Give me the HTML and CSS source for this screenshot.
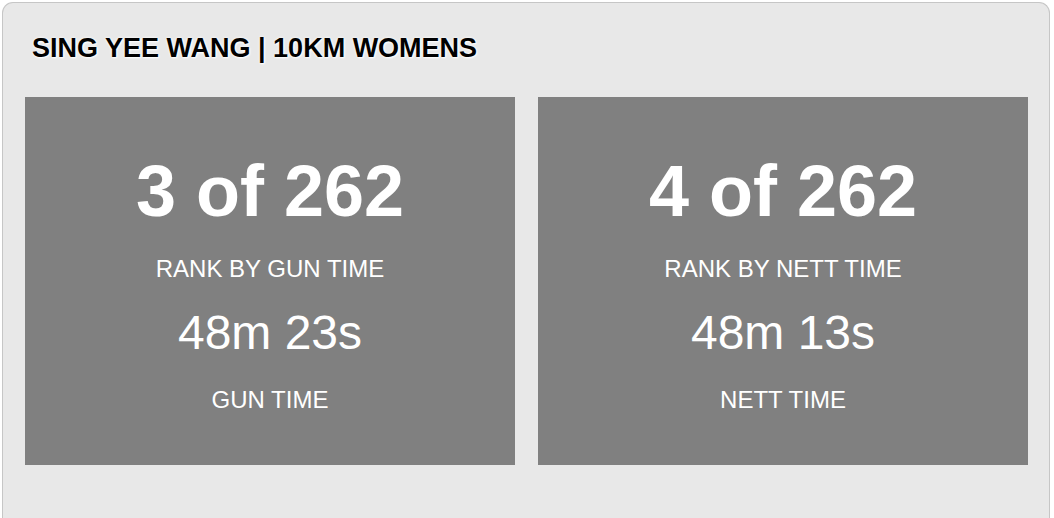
FILE: index.html
```html
<!doctype html>
<html lang="en">
	<head>
		<meta charset="UTF-8" />
		<meta name="viewport" content="width=device-width, initial-scale=1.0" />
		<title>Sing Yee Wang | 10KM Womens</title>
		<link rel="stylesheet" href="styles.css">
	</head>
	<body>
		<div class="panel">
			<h2 class="panel-title">SING YEE WANG | 10KM WOMENS</h2>

			<div class="stats">
				<div class="stat-card">
					<div class="stat-rank">3 of 262</div>
					<div class="stat-label">RANK BY GUN TIME</div>
					<div class="stat-time">48m 23s</div>
					<div class="stat-label stat-label-last">GUN TIME</div>
				</div>
				<div class="stat-card">
					<div class="stat-rank">4 of 262</div>
					<div class="stat-label">RANK BY NETT TIME</div>
					<div class="stat-time">48m 13s</div>
					<div class="stat-label stat-label-last">NETT TIME</div>
				</div>
			</div>
		</div>
	</body>
</html>
```

FILE: styles.css
```css
* {
	margin: 0;
	padding: 0;
	box-sizing: border-box;
}

html,
body {
	height: 100%;
}

body {
	font-family: "Liberation Sans", Arial, sans-serif;
	background: #ffffff;
	padding: 2px 4px 0 2px;
	overflow: hidden;
}

/* panel runs on below the fold, so no bottom edge */
.panel {
	height: 100%;
	background: #e8e8e8;
	border: 1px solid #c6c6c6;
	border-bottom: none;
	border-radius: 11px 11px 0 0;
	padding: 30px 21px 0 22px;
}

.panel-title {
	font-size: 27px;
	line-height: 30px;
	font-weight: 700;
	color: #000;
	padding-left: 7px;
	text-shadow: 0 0 3px #fff, 1px 1px 2px #fff;
	margin-bottom: 34px;
}

.stats {
	display: grid;
	grid-template-columns: 1fr 1fr;
	gap: 23px;
}

.stat-card {
	background: #808080;
	color: #fff;
	text-align: center;
	height: 368px;
	padding-top: 58px;
}

.stat-rank {
	font-size: 72px;
	line-height: 72px;
	font-weight: 700;
}

.stat-label {
	font-size: 24px;
	line-height: 24px;
	margin-top: 30px;
}

.stat-time {
	font-size: 48px;
	line-height: 48px;
	margin-top: 28px;
}

.stat-label-last {
	margin-top: 31px;
}
```
